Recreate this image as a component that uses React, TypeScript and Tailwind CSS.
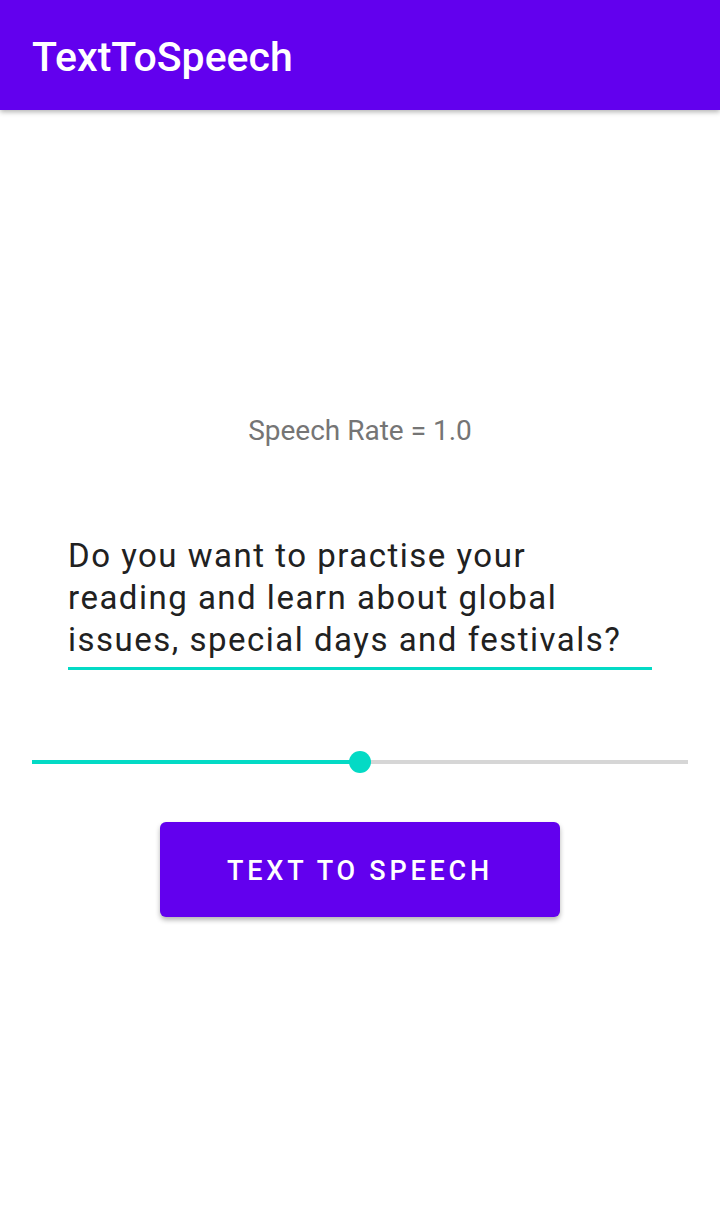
export default function App() {
  return (
    <div className="w-[720px] h-[1231px] bg-white relative overflow-hidden" style={{ fontFamily: "Roboto, 'Noto Sans', sans-serif" }}>
      <div className="h-[110px] bg-[#6200EE] flex items-center pl-[32px] shadow-[0_2px_5px_rgba(0,0,0,0.3)] relative z-10">
        <span className="text-white text-[41px] font-medium leading-none mt-[4px]">TextToSpeech</span>
      </div>
      <div className="flex flex-col items-center">
        <div className="mt-[305px] text-[#757575] text-[28px] leading-[32px]">Speech Rate = 1.0</div>
        <div className="mt-[88px] w-[584px]">
          <div className="text-[#212121] text-[33px] tracking-[1.5px] leading-[42px] whitespace-nowrap">
            Do you want to practise your
            <br />
            reading and learn about global
            <br />
            issues, special days and festivals?
          </div>
          <div className="mt-[6px] h-[3px] bg-[#03DAC5]" />
        </div>
        <div className="mt-[80px] w-[656px] h-[24px] flex items-center relative">
          <div className="h-[4px] w-[328px] bg-[#03DAC5]" />
          <div className="h-[4px] flex-1 bg-[#D6D6D6]" />
          <div className="absolute left-[317px] top-[1px] w-[22px] h-[22px] rounded-full bg-[#03DAC5]" />
        </div>
        <button className="mt-[48px] w-[400px] h-[95px] rounded-[6px] bg-[#6200EE] text-white text-[27px] font-medium tracking-[0.14em] shadow-[0_3px_5px_rgba(0,0,0,0.3)]">
          <span className="relative top-[2px]">TEXT TO SPEECH</span>
        </button>
      </div>
    </div>
  );
}
